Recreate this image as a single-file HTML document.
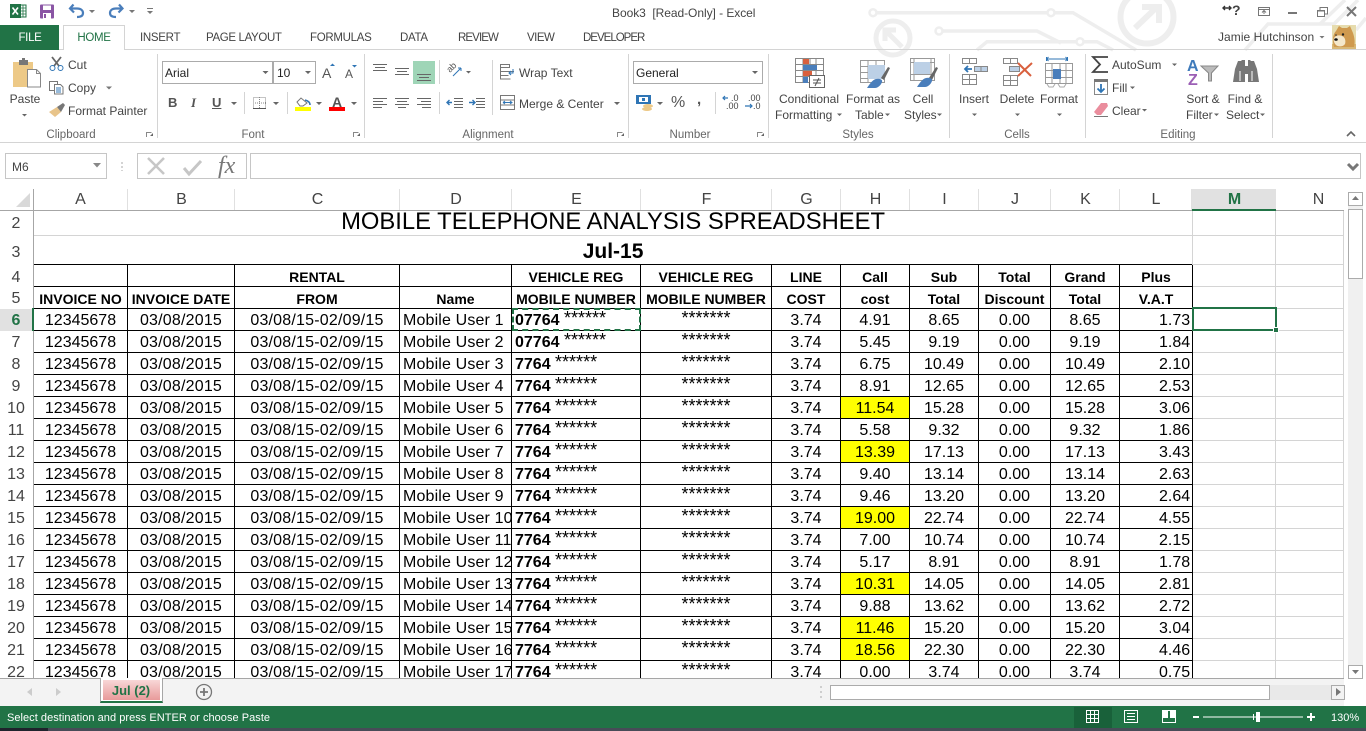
<!DOCTYPE html>
<html lang="en"><head><meta charset="utf-8"><title>Book3 [Read-Only] - Excel</title>
<style>
html,body{margin:0;padding:0;width:1366px;height:731px;overflow:hidden;background:#fff;font-family:"Liberation Sans",Arial,sans-serif}
#app{position:relative;width:1366px;height:731px;overflow:hidden;background:#fff}
.t{position:absolute;white-space:nowrap;font-size:12px;line-height:16px;color:#444}
.c{transform:translateX(-50%)}
.tab{font-size:11.5px;letter-spacing:-.3px}
.g{color:#666;font-size:11.5px}
.box{position:absolute;border:1px solid #ababab;box-sizing:border-box;background:#fff}
svg{position:absolute;left:0;top:0}
.ch{position:absolute;top:189px;height:21px;padding-left:1px;font-size:16px;line-height:21px;color:#444;text-align:center;border-right:1px solid #e0e0e0;box-sizing:border-box}
.rh{position:absolute;left:0;margin-top:1px;width:32px;text-align:center;font-size:16px;line-height:22px;color:#444}
#sheet{position:absolute;left:34px;top:211px;width:1310px;height:467px;overflow:hidden}
table{border-collapse:separate;border-spacing:0;table-layout:fixed;width:1310px;font-family:"Liberation Sans",Arial,sans-serif}
td{box-sizing:border-box;height:22px;padding:2px 0 0;border-right:1px solid #000;border-bottom:1px solid #000;font-size:16px;line-height:19px;text-align:center;white-space:nowrap;overflow:hidden;color:#000;vertical-align:bottom}
td.h{font-size:14px;font-weight:bold;padding-top:4px;line-height:17px}
td.l{text-align:left;padding-left:3px}
td.r{text-align:right;padding-right:2px}
td.x{border-color:#d4d4d4}
td.y{background:#ff0}
td:not(.h):nth-child(2),td:not(.h):nth-child(3){letter-spacing:.2px}
td:not(.h):nth-child(4){letter-spacing:.15px}
td.e{letter-spacing:0}
.s{font-size:18px;position:relative;top:-1px;line-height:10px}
.e b{font-size:16px}
</style></head><body><div id="app">

<!-- watermark + icons, top of window -->
<svg width="1366" height="190" viewBox="0 0 1366 190">
<g fill="none" stroke="#eeeeee" stroke-width="3.500">
<path d="M877 12.700H1047M1055 12.700H1073L1136 50"/><circle cx="873" cy="12.700" r="3.500" stroke-width="2.500"/><circle cx="1051" cy="12.700" r="3.500" stroke-width="2.500"/>
<circle cx="893" cy="38" r="17" stroke-width="5"/><path d="M902 47L887 32M885 41V30h11" stroke-width="5"/>
<circle cx="1147" cy="17" r="26.500" stroke-width="6"/><path d="M1135 28l23-22M1142 7h17v16" stroke-width="6"/>
<circle cx="939" cy="31" r="3.500" stroke-width="2.500"/><path d="M943 31h94l24 12"/><circle cx="1080" cy="41.700" r="3.500" stroke-width="2.500"/>
<path d="M977 50l10-8.300h89M1084 41.700h13l16 8.300"/>
<path d="M1245 50L1268 24H1334L1358 0M1356 30L1366 18"/>
<path d="M1320 24L1345 0"/>
</g>

<!-- excel logo -->
<rect x="16" y="5" width="10" height="12" fill="#fff" stroke="#217346"/><path d="M19 5v12M23 5v12M16 8h10M16 11h10M16 14h10" stroke="#217346" stroke-width=".8"/>
<rect x="10" y="4" width="11" height="14" fill="#217346"/><path d="M12.500 7.500l5.500 7M18 7.500l-5.500 7" stroke="#fff" stroke-width="1.600"/>
<!-- save -->
<rect x="40" y="4.500" width="14" height="14" rx="1" fill="#8a55a4"/><rect x="43" y="5.500" width="8" height="4.500" fill="#fff"/><rect x="43" y="13" width="8" height="5.500" fill="#fff"/><rect x="44" y="14" width="2" height="4" fill="#8a55a4"/>
<!-- undo / redo -->
<path d="M73.500 4.500L70 8.500l4 4M70.500 8.500H77c4 0 6 2 6 4.500s-2 4-6 4" fill="none" stroke="#4a7ebb" stroke-width="2.200"/>
<path d="M119 4.500l3.500 4-4 4M122 8.500H116c-4 0-6 2-6 4.500s2 4 6 4" fill="none" stroke="#4a7ebb" stroke-width="2.200"/>
<g fill="#777"><path d="M89 10h6l-3 3zM129 10h6l-3 3z"/><rect x="147" y="8" width="6" height="1"/><path d="M147 11h6l-3 3z"/></g>

<!-- paste -->
<rect x="13" y="62" width="20" height="25" fill="#edc987"/><rect x="19" y="60" width="9" height="5" fill="#777"/><rect x="22" y="58" width="3" height="3" fill="#777"/>
<path d="M27.500 69.500h9l4 4v13.500h-13z" fill="#fff" stroke="#888"/><path d="M36.500 69.500v4h4" fill="none" stroke="#888"/>
<path d="M22 114h5l-2.500 2.500z" fill="#666"/>
<!-- cut -->
<g fill="none"><path d="M52 57l7 9M61 57l-7 9" stroke="#666" stroke-width="1.800"/><circle cx="52.500" cy="68" r="2.500" stroke="#2f75b5"/><circle cx="60.500" cy="68" r="2.500" stroke="#2f75b5"/></g>
<!-- copy -->
<g fill="#fff" stroke="#777"><path d="M49.500 81.500h8v9h-8z"/><path d="M54.500 84.500h6l2.500 2.500v7h-8.500z"/></g><path d="M56 88h5M56 90h5M56 92h5" stroke="#2f75b5"/>
<path d="M106 86.500h6l-3 3z" fill="#777"/>
<!-- painter -->
<path d="M49 112l8-5 4 5-6 5z" fill="#e8c48a"/><path d="M57 107l6-4 2 2-4 7z" fill="#777"/>

<!-- separators -->
<g fill="#d4d4d4"><rect x="157" y="54" width="1" height="84"/><rect x="364" y="54" width="1" height="84"/><rect x="628" y="54" width="1" height="84"/><rect x="768" y="54" width="1" height="84"/><rect x="949" y="54" width="1" height="84"/><rect x="1085" y="54" width="1" height="84"/><rect x="1272" y="54" width="1" height="84"/>
<rect x="244" y="92" width="1" height="22"/><rect x="287" y="92" width="1" height="22"/><rect x="439" y="60" width="1" height="24"/><rect x="439" y="92" width="1" height="22"/><rect x="492" y="60" width="1" height="55"/><rect x="715" y="92" width="1" height="22"/></g>
<!-- dialog launchers -->
<g fill="none" stroke="#888"><path d="M146.500 137v-4.500h5M353.500 137v-4.500h5M617.500 137v-4.500h5M757.500 137v-4.500h5"/></g>
<g fill="#666"><path d="M150 135l3-3v3zM357 135l3-3v3zM621 135l3-3v3zM761 135l3-3v3z" transform="translate(0 1)"/></g>

<!-- font controls arrows -->
<g fill="#666"><path d="M231 102h6l-3 3zM273 102h6l-3 3zM316 102h6l-3 3zM351 102h6l-3 3zM614 102h6l-3 3zM657 102h6l-3 3zM466 71h5l-2.500 2.500z"/></g>
<path d="M330 66l2.500-2.500L335 66z" fill="#2f75b5"/><path d="M352 65h5l-2.500 2.500z" fill="#2f75b5"/>
<!-- borders icon -->
<g fill="none" stroke="#888" stroke-dasharray="1 1"><rect x="253.500" y="97.500" width="12" height="11"/><path d="M259.500 97v12M253 103h13"/></g><path d="M253 108.500h13" stroke="#555"/>
<!-- fill colour -->
<path d="M297 102l4-4 6 5-4 3h-3z" fill="#fff" stroke="#777"/><path d="M305 100c3 1 5 2 5 5" fill="none" stroke="#2f75b5" stroke-width="1.500"/>
<rect x="295" y="107" width="16" height="4" fill="#ff0"/>
<rect x="329" y="107" width="16" height="4" fill="#f00"/>

<!-- alignment -->
<rect x="413" y="61" width="22" height="23" fill="#9fd5b7"/>
<g fill="#666"><rect x="373" y="64" width="14" height="1"/><rect x="375" y="67" width="10" height="1"/><rect x="373" y="70" width="14" height="1"/>
<rect x="395" y="68" width="14" height="1"/><rect x="397" y="71" width="10" height="1"/><rect x="395" y="74" width="14" height="1"/>
<rect x="417" y="74" width="14" height="1"/><rect x="419" y="77" width="10" height="1"/><rect x="417" y="80" width="14" height="1"/>
<rect x="373" y="98" width="14" height="1"/><rect x="373" y="101" width="10" height="1"/><rect x="373" y="104" width="14" height="1"/><rect x="373" y="107" width="9" height="1"/>
<rect x="395" y="98" width="14" height="1"/><rect x="397" y="101" width="10" height="1"/><rect x="395" y="104" width="14" height="1"/><rect x="398" y="107" width="8" height="1"/>
<rect x="417" y="98" width="14" height="1"/><rect x="421" y="101" width="10" height="1"/><rect x="417" y="104" width="14" height="1"/><rect x="422" y="107" width="9" height="1"/>
<rect x="454" y="98" width="9" height="1"/><rect x="454" y="101" width="9" height="1"/><rect x="454" y="104" width="9" height="1"/><rect x="454" y="107" width="9" height="1"/>
<rect x="476" y="98" width="9" height="1"/><rect x="476" y="101" width="9" height="1"/><rect x="476" y="104" width="9" height="1"/><rect x="476" y="107" width="9" height="1"/></g>
<path d="M452 102.500h-5m2.500-2.500l-2.500 2.500 2.500 2.500M469 102.500h6m-2.500-2.500l2.500 2.500-2.500 2.500" fill="none" stroke="#2f75b5" stroke-width="1.400"/>
<!-- orientation -->
<path d="M453 76l8-8M461 68v3M461 68h-3" stroke="#2f75b5" fill="none"/>
<text x="450" y="73" font-size="9" fill="#555" transform="rotate(-45 450 73)" font-family="Liberation Sans">ab</text>
<!-- wrap / merge -->
<g fill="none" stroke="#777"><rect x="500.500" y="64.500" width="9" height="3"/><path d="M500 71.500h14M500.500 75.500h8M500.500 64v15h10"/><rect x="500.500" y="95.500" width="14" height="14"/><path d="M500 100h15M500 105h15"/></g>
<path d="M513 69v4h-4m2-2l-2 2 2 2M503 102.500h9m-2-1.500l2 1.500-2 1.500m-7-1.500l2-1.500m-2 1.500l2 1.500" fill="none" stroke="#2f75b5"/>
<!-- number -->
<rect x="636" y="95" width="15" height="9" fill="#2f75b5"/><rect x="639" y="97" width="9" height="5" fill="#fff"/><rect x="642" y="98" width="3" height="3" fill="#2f75b5"/><ellipse cx="648" cy="106" rx="5" ry="2" fill="#edc987"/><ellipse cx="647" cy="109" rx="5" ry="2" fill="#edc987"/>
<path d="M728 98h-5m2-2l-2 2 2 2" fill="none" stroke="#2f75b5" stroke-width="1.200"/>
<path d="M745 106h7m-2-2l2 2-2 2" fill="none" stroke="#2f75b5" stroke-width="1.200"/>

<!-- conditional formatting -->
<g fill="none" stroke="#888"><rect x="795.500" y="58.500" width="28" height="24" fill="#fff"/><path d="M803 58v24M810 58v24M816 58v24M795 64.500h28M795 70.500h28M795 76.500h28"/></g>
<rect x="803" y="59" width="6" height="5" fill="#d9603e"/><rect x="803" y="65" width="14" height="5" fill="#4a7ebb"/><rect x="803" y="71" width="9" height="5" fill="#d9603e"/><rect x="803" y="77" width="5" height="6" fill="#4a7ebb"/>
<rect x="809.500" y="75.500" width="15" height="12" fill="#fff" stroke="#666"/><path d="M813 80h8M813 83h8M819 78l-4 8" stroke="#555" fill="none"/>
<!-- format as table -->
<g fill="none" stroke="#999"><rect x="860.500" y="60.500" width="24" height="22" fill="#fff"/><path d="M868 60v22M876 60v22M860 66.500h24M860 72.500h24M860 78.500h24"/></g>
<rect x="868" y="65" width="17" height="14" fill="#bcd0e6"/>
<path d="M881 78l7-11 2 1-6 12z" fill="#666"/><path d="M867 88c2-3 5-8 9-9 4-1 7 1 6 3-1 3-4 6-7 6z" fill="#4a7ebb"/>
<!-- cell styles -->
<g fill="none" stroke="#999"><rect x="910.500" y="58.500" width="24" height="22" fill="#fff"/><path d="M914 58v22M931 58v22M910 62.500h24M910 74.500h24"/></g>
<rect x="914" y="62" width="16" height="12" fill="#bcd0e6"/>
<path d="M929 78l7-11 2 1-6 12z" fill="#666"/><path d="M917 87c2-3 5-8 9-9 4-1 7 1 6 3-1 3-4 6-7 6z" fill="#4a7ebb"/>
<!-- insert -->
<g fill="none" stroke="#888"><rect x="962.500" y="58.500" width="14" height="5"/><path d="M969.500 58v5"/><rect x="962.500" y="74.500" width="14" height="10"/><path d="M969.500 74v10M962 79.500h14"/><rect x="974.500" y="66.500" width="13" height="5" fill="#bcd0e6"/><path d="M981 66v5"/></g>
<path d="M972 69h-7m3-3l-3 3 3 3" fill="none" stroke="#2f75b5" stroke-width="1.800"/>
<!-- delete -->
<g fill="none" stroke="#888"><rect x="1003.500" y="58.500" width="14" height="5"/><path d="M1010.500 58v5"/><rect x="1003.500" y="75.500" width="14" height="10"/><path d="M1010.500 75v10M1003 80.500h14"/><rect x="1009.500" y="66.500" width="10" height="5" fill="#bcd0e6"/></g>
<path d="M1018 63l13 13M1032 63l-14 13" stroke="#d9603e" stroke-width="2"/>
<!-- format -->
<path d="M1046.500 59h21m-19-2l-2 2 2 2m17-4l2 2-2 2" fill="none" stroke="#2f75b5"/>
<path d="M1046.500 57v4M1067.500 57v4" stroke="#2f75b5"/>
<g fill="none" stroke="#999"><rect x="1045.500" y="63.500" width="27" height="20"/><path d="M1052 63v20M1060 63v20M1066 63v20M1045 70.500h27M1045 77.500h27"/></g>
<rect x="1053" y="69" width="8" height="10" fill="#4a7ebb"/>
<path d="M1047 84l2 3h4l2-3M1058 84l2 3h4l2-3" fill="none" stroke="#aaa"/>
<!-- autosum -->
<path d="M1108 57h-15l7 7.500-7 7.500h15" fill="none" stroke="#444" stroke-width="1.800"/>
<path d="M1172 63.500h5l-2.500 2.500zM1130 86.500h5l-2.500 2.500zM1142 109h5l-2.500 2.500zM1214 113.500h5l-2.500 2.500zM1260 113.500h5l-2.500 2.500zM837 113.500h5l-2.500 2.500zM885 113.500h5l-2.500 2.500zM937 113.500h5l-2.500 2.500zM972 113.500h5l-2.500 2.500zM1015 113.500h5l-2.500 2.500zM1057 113.500h5l-2.500 2.500z" fill="#666"/>
<!-- fill -->
<rect x="1094.500" y="79.500" width="13" height="15" fill="#fff" stroke="#888"/><rect x="1094" y="79" width="14" height="3" fill="#777"/><path d="M1101 84v8m-3.500-3.500l3.500 3.500 3.500-3.500" fill="none" stroke="#2f75b5" stroke-width="1.800"/>
<!-- eraser -->
<path d="M1094 112l7-9h6l1 3-7 9h-4z" fill="#ea8d9d"/><path d="M1094 116.500h14" stroke="#777"/>
<!-- sort -->
<text x="1187" y="71" font-size="16" font-weight="bold" fill="#3f7bbb" font-family="Liberation Sans">A</text>
<text x="1188" y="85" font-size="16" font-weight="bold" fill="#9b5fb5" font-family="Liberation Sans">Z</text>
<path d="M1201 66h17l-6.500 7v8h-3v-8z" fill="#bbb" stroke="#888"/>
<!-- binoculars -->
<path d="M1233 82l2-13 3-8h3l1-1h3v22zM1259 82l-2-13-3-8h-3l-1-1h-2v22z" fill="#777"/><rect x="1244" y="66" width="4" height="8" fill="#777"/><path d="M1240 71v10M1252 71v10" stroke="#fff"/>
<path d="M1347 136l4-4 4 4" fill="none" stroke="#666" stroke-width="1.600"/>

<!-- window controls -->
<path d="M1223 8h8m-6-2l-2 2 2 2m4-4l2 2-2 2" fill="none" stroke="#333" stroke-width="1.400"/>
<rect x="1258.500" y="7.500" width="11" height="8" fill="none" stroke="#777"/><path d="M1258 9.500h12M1264 14v-3m-2 1.500l2-2 2 2" fill="none" stroke="#777"/>
<rect x="1288" y="12" width="9" height="2" fill="#777"/>
<g fill="none" stroke="#777"><rect x="1317.500" y="10.500" width="7" height="6"/><path d="M1320 10V7.500h7.500V14H1325"/></g><rect x="1317" y="10" width="8" height="1.500" fill="#777"/>
<path d="M1347 7l9 9M1356 7l-9 9" stroke="#777" stroke-width="2"/>
<path d="M1319.500 36h5l-2.500 2.500z" fill="#777"/>
<!-- avatar -->
<rect x="1332" y="25" width="24" height="24" fill="#e6dcae"/>
<rect x="1332" y="44" width="24" height="5" fill="#d8b877"/>
<path d="M1334 47c-2-7-1-13 2-16l3-5 3 2h5l3-2 3 7c2 6 2 10 1 14z" fill="#cf9a4f"/>
<path d="M1334 38c2-3 5-3 8-2 3 1 4 5 3 8-2 3-7 3-9 1-2-2-3-5-2-7z" fill="#f4e8cc"/>
<circle cx="1343" cy="34.500" r="1.200" fill="#222"/><circle cx="1336" cy="35" r=".8" fill="#333"/><ellipse cx="1336" cy="39.500" rx="1.800" ry="1.300" fill="#111"/>

<!-- formula bar marks -->
<path d="M122 162v2M122 166v2M122 170v1" stroke="#aaa" fill="none"/>
<path d="M148 158l16 16M164 158l-16 16" stroke="#c6c6c6" stroke-width="2.500"/>
<path d="M184 168l5 6 12-13" fill="none" stroke="#c6c6c6" stroke-width="3"/>
<path d="M1348 164l5 5 5-5" fill="none" stroke="#777" stroke-width="3"/>
<path d="M93 163h8l-4 4.500z" fill="#888"/>
</svg>

<!-- title bar text -->
<div class="t" style="left:612px;top:5px;white-space:pre;letter-spacing:-.05px">Book3  [Read-Only] - Excel</div>
<div class="t" style="left:1232px;top:2px;font-size:14px;font-weight:bold;color:#444">?</div>

<!-- tabs -->
<div style="position:absolute;left:0;top:49px;width:1366px;height:1px;background:#d4d4d4"></div>
<div style="position:absolute;left:0;top:25px;width:59px;height:25px;background:#217346"></div>
<div class="t tab c" style="left:30px;top:30px;color:#fff">FILE</div>
<div style="position:absolute;left:63px;top:25px;width:62px;height:25px;box-sizing:border-box;border:1px solid #d4d4d4;border-bottom:0;background:#fff"></div>
<div class="t tab c" style="left:94px;top:30px;color:#217346">HOME</div>
<div class="t tab" style="left:140px;top:30px">INSERT</div>
<div class="t tab" style="left:206px;top:30px;letter-spacing:-.35px">PAGE LAYOUT</div>
<div class="t tab" style="left:310px;top:30px">FORMULAS</div>
<div class="t tab" style="left:400px;top:30px">DATA</div>
<div class="t tab" style="left:458px;top:30px;letter-spacing:-.9px">REVIEW</div>
<div class="t tab" style="left:527px;top:30px;letter-spacing:-.5px">VIEW</div>
<div class="t tab" style="left:583px;top:30px;letter-spacing:-1px">DEVELOPER</div>
<div class="t" style="left:1218px;top:29px;letter-spacing:.05px">Jamie Hutchinson</div>

<!-- clipboard -->
<div class="t c" style="left:25px;top:91px">Paste</div>
<div class="t" style="left:68px;top:57px">Cut</div>
<div class="t" style="left:68px;top:80px">Copy</div>
<div class="t" style="left:68px;top:103px">Format Painter</div>
<div class="t g c" style="left:71px;top:127px">Clipboard</div>

<!-- font -->
<div class="box" style="left:162px;top:61px;width:111px;height:23px"></div>
<div class="box" style="left:273px;top:61px;width:43px;height:23px"></div>
<div class="t" style="left:165px;top:65px;color:#222">Arial</div>
<div class="t" style="left:277px;top:65px;color:#222">10</div>
<div class="t" style="left:322px;top:65px;font-size:14px;color:#555">A</div>
<div class="t" style="left:345px;top:66px;font-size:12px;color:#555">A</div>
<svg width="360" height="120"><path d="M262.500 71h6l-3 3zM305 71h6l-3 3z" fill="#666"/></svg>
<div class="t" style="left:168px;top:95px;font-weight:bold;font-size:13px;color:#555">B</div>
<div class="t" style="left:191px;top:95px;font-style:italic;font-family:'Liberation Serif',serif;font-weight:bold;font-size:13px;color:#555">I</div>
<div class="t" style="left:212px;top:95px;font-weight:bold;font-size:13px;color:#555;text-decoration:underline">U</div>
<div class="t c" style="left:337px;top:94px;font-weight:bold;font-size:14px;color:#555">A</div>
<div class="t g c" style="left:253px;top:127px">Font</div>

<!-- alignment -->
<div class="t" style="left:519px;top:65px">Wrap Text</div>
<div class="t" style="left:519px;top:96px">Merge &amp; Center</div>
<div class="t g c" style="left:488px;top:127px">Alignment</div>

<!-- number -->
<div class="box" style="left:633px;top:61px;width:130px;height:23px"></div>
<div class="t" style="left:636px;top:65px;color:#222">General</div>
<svg width="770" height="120"><path d="M752 71h6l-3 3z" fill="#666"/></svg>
<div class="t" style="left:671px;top:95px;font-size:16px;color:#555">%</div>
<div class="t" style="left:697px;top:92px;font-size:15px;font-weight:bold;color:#555">,</div>
<div class="t" style="left:731px;top:94px;font-size:9px;line-height:9px;color:#444">.0</div>
<div class="t" style="left:726px;top:102px;font-size:9px;line-height:9px;color:#444">.00</div>
<div class="t" style="left:748px;top:94px;font-size:9px;line-height:9px;color:#444">.00</div>
<div class="t" style="left:753px;top:102px;font-size:9px;line-height:9px;color:#444">.0</div>
<div class="t g c" style="left:690px;top:127px">Number</div>

<!-- styles -->
<div class="t c" style="left:809px;top:91px">Conditional</div>
<div class="t" style="left:775px;top:107px">Formatting</div>
<div class="t c" style="left:873px;top:91px">Format as</div>
<div class="t" style="left:855px;top:107px">Table</div>
<div class="t c" style="left:923px;top:91px">Cell</div>
<div class="t" style="left:904px;top:107px">Styles</div>
<div class="t g c" style="left:858px;top:127px">Styles</div>

<!-- cells -->
<div class="t c" style="left:974px;top:91px">Insert</div>
<div class="t c" style="left:1017px;top:91px">Delete</div>
<div class="t c" style="left:1059px;top:91px">Format</div>
<div class="t g c" style="left:1017px;top:127px">Cells</div>

<!-- editing -->
<div class="t" style="left:1112px;top:57px">AutoSum</div>
<div class="t" style="left:1112px;top:80px">Fill</div>
<div class="t" style="left:1112px;top:103px">Clear</div>
<div class="t c" style="left:1203px;top:91px">Sort &amp;</div>
<div class="t" style="left:1186px;top:107px">Filter</div>
<div class="t c" style="left:1245px;top:91px">Find &amp;</div>
<div class="t" style="left:1226px;top:107px">Select</div>
<div class="t g c" style="left:1178px;top:127px">Editing</div>

<div style="position:absolute;left:0;top:142px;width:1366px;height:1px;background:#d4d4d4"></div>

<!-- formula bar -->
<div class="box" style="left:5px;top:153px;width:102px;height:26px;border-color:#c6c6c6;background:none"></div>
<div class="t" style="left:12px;top:159px">M6</div>
<div class="box" style="left:137px;top:153px;width:110px;height:26px;border-color:#c6c6c6;background:none"></div>
<div class="t" style="left:218px;top:155px;font:italic 24px/22px 'Liberation Serif',serif;color:#777">fx</div>
<div class="box" style="left:250px;top:153px;width:1111px;height:26px;border-color:#c6c6c6;background:none"></div>

<!-- column headers -->
<div style="position:absolute;left:1192px;top:189px;width:84px;height:21px;background:#e1e1e1"></div>
<div class="ch" style="left:33px;width:95px">A</div>
<div class="ch" style="left:128px;width:107px">B</div>
<div class="ch" style="left:235px;width:165px">C</div>
<div class="ch" style="left:400px;width:112px">D</div>
<div class="ch" style="left:512px;width:129px">E</div>
<div class="ch" style="left:641px;width:131px">F</div>
<div class="ch" style="left:772px;width:69px">G</div>
<div class="ch" style="left:841px;width:69px">H</div>
<div class="ch" style="left:910px;width:69px">I</div>
<div class="ch" style="left:979px;width:72px">J</div>
<div class="ch" style="left:1051px;width:69px">K</div>
<div class="ch" style="left:1120px;width:72px">L</div>
<div class="ch" style="left:1192px;width:84px;color:#217346;font-weight:bold;border:0">M</div>
<div class="ch" style="left:1276px;width:84px;border:0">N</div>
<svg width="40" height="212"><path d="M30 193v14H16z" fill="#d9d9d9"/></svg>
<div style="position:absolute;left:0;top:210px;width:1344px;height:1px;background:#a6a6a6"></div>
<div style="position:absolute;left:1192px;top:209px;width:84px;height:2px;background:#217346"></div>
<div style="position:absolute;left:33px;top:189px;width:1px;height:489px;background:#a6a6a6"></div>

<!-- row headers -->
<div class="rh" style="top:211px;height:25px;line-height:24px">2</div>
<div class="rh" style="top:236px;height:29px;line-height:32px">3</div>
<div class="rh" style="top:265px;line-height:24px">4</div>
<div class="rh" style="top:287px">5</div>
<div style="position:absolute;left:0;top:309px;width:33px;height:22px;background:#e1e1e1"></div>
<div style="position:absolute;left:32px;top:308px;width:2px;height:23px;background:#217346"></div>
<div class="rh" style="top:309px;color:#217346;font-weight:bold">6</div>
<div class="rh" style="top:331px">7</div>
<div class="rh" style="top:353px">8</div>
<div class="rh" style="top:375px">9</div>
<div class="rh" style="top:397px">10</div>
<div class="rh" style="top:419px">11</div>
<div class="rh" style="top:441px">12</div>
<div class="rh" style="top:463px">13</div>
<div class="rh" style="top:485px">14</div>
<div class="rh" style="top:507px">15</div>
<div class="rh" style="top:529px">16</div>
<div class="rh" style="top:551px">17</div>
<div class="rh" style="top:573px">18</div>
<div class="rh" style="top:595px">19</div>
<div class="rh" style="top:617px">20</div>
<div class="rh" style="top:639px">21</div>
<div class="rh" style="top:661px;height:16px;overflow:hidden">22</div>

<!-- grid -->
<div style="position:absolute;left:34px;top:264px;width:1159px;height:1px;background:#000"></div>
<div id="sheet">
<table>
<colgroup><col style="width:94px"><col style="width:107px"><col style="width:165px"><col style="width:112px"><col style="width:129px"><col style="width:131px"><col style="width:69px"><col style="width:69px"><col style="width:69px"><col style="width:72px"><col style="width:69px"><col style="width:73px"><col style="width:83px"><col style="width:68px"></colgroup>
<tr><td colspan="12" class="x" style="height:25px;font-size:23.800px;line-height:22px;padding:0;vertical-align:top;overflow:visible">MOBILE TELEPHONE ANALYSIS SPREADSHEET</td><td class="x" style="height:25px"></td><td class="x" style="height:25px"></td></tr>
<tr><td colspan="12" style="height:29px;font-size:21px;font-weight:bold;padding-top:3px;line-height:26px;border-bottom:0;border-right-color:#d4d4d4">Jul-15</td><td class="x" style="height:29px"></td><td class="x" style="height:29px"></td></tr>
<tr><td class="h"></td><td class="h"></td><td class="h">RENTAL</td><td class="h"></td><td class="h">VEHICLE REG</td><td class="h">VEHICLE REG</td><td class="h">LINE</td><td class="h">Call</td><td class="h">Sub</td><td class="h">Total</td><td class="h">Grand</td><td class="h">Plus</td><td class="x"></td><td class="x"></td></tr>
<tr><td class="h">INVOICE NO</td><td class="h">INVOICE DATE</td><td class="h">FROM</td><td class="h">Name</td><td class="h">MOBILE NUMBER</td><td class="h">MOBILE NUMBER</td><td class="h">COST</td><td class="h">cost</td><td class="h">Total</td><td class="h">Discount</td><td class="h">Total</td><td class="h">V.A.T</td><td class="x"></td><td class="x"></td></tr>
<tr><td>12345678</td><td>03/08/2015</td><td>03/08/15-02/09/15</td><td class="l">Mobile User 1</td><td class="l e"><b>07764</b> <span class="s">******</span></td><td><span class="s">*******</span></td><td>3.74</td><td>4.91</td><td>8.65</td><td>0.00</td><td>8.65</td><td class="r">1.73</td><td class="x"></td><td class="x"></td></tr>
<tr><td>12345678</td><td>03/08/2015</td><td>03/08/15-02/09/15</td><td class="l">Mobile User 2</td><td class="l e"><b>07764</b> <span class="s">******</span></td><td><span class="s">*******</span></td><td>3.74</td><td>5.45</td><td>9.19</td><td>0.00</td><td>9.19</td><td class="r">1.84</td><td class="x"></td><td class="x"></td></tr>
<tr><td>12345678</td><td>03/08/2015</td><td>03/08/15-02/09/15</td><td class="l">Mobile User 3</td><td class="l e"><b>7764</b> <span class="s">******</span></td><td><span class="s">*******</span></td><td>3.74</td><td>6.75</td><td>10.49</td><td>0.00</td><td>10.49</td><td class="r">2.10</td><td class="x"></td><td class="x"></td></tr>
<tr><td>12345678</td><td>03/08/2015</td><td>03/08/15-02/09/15</td><td class="l">Mobile User 4</td><td class="l e"><b>7764</b> <span class="s">******</span></td><td><span class="s">*******</span></td><td>3.74</td><td>8.91</td><td>12.65</td><td>0.00</td><td>12.65</td><td class="r">2.53</td><td class="x"></td><td class="x"></td></tr>
<tr><td>12345678</td><td>03/08/2015</td><td>03/08/15-02/09/15</td><td class="l">Mobile User 5</td><td class="l e"><b>7764</b> <span class="s">******</span></td><td><span class="s">*******</span></td><td>3.74</td><td class="y">11.54</td><td>15.28</td><td>0.00</td><td>15.28</td><td class="r">3.06</td><td class="x"></td><td class="x"></td></tr>
<tr><td>12345678</td><td>03/08/2015</td><td>03/08/15-02/09/15</td><td class="l">Mobile User 6</td><td class="l e"><b>7764</b> <span class="s">******</span></td><td><span class="s">*******</span></td><td>3.74</td><td>5.58</td><td>9.32</td><td>0.00</td><td>9.32</td><td class="r">1.86</td><td class="x"></td><td class="x"></td></tr>
<tr><td>12345678</td><td>03/08/2015</td><td>03/08/15-02/09/15</td><td class="l">Mobile User 7</td><td class="l e"><b>7764</b> <span class="s">******</span></td><td><span class="s">*******</span></td><td>3.74</td><td class="y">13.39</td><td>17.13</td><td>0.00</td><td>17.13</td><td class="r">3.43</td><td class="x"></td><td class="x"></td></tr>
<tr><td>12345678</td><td>03/08/2015</td><td>03/08/15-02/09/15</td><td class="l">Mobile User 8</td><td class="l e"><b>7764</b> <span class="s">******</span></td><td><span class="s">*******</span></td><td>3.74</td><td>9.40</td><td>13.14</td><td>0.00</td><td>13.14</td><td class="r">2.63</td><td class="x"></td><td class="x"></td></tr>
<tr><td>12345678</td><td>03/08/2015</td><td>03/08/15-02/09/15</td><td class="l">Mobile User 9</td><td class="l e"><b>7764</b> <span class="s">******</span></td><td><span class="s">*******</span></td><td>3.74</td><td>9.46</td><td>13.20</td><td>0.00</td><td>13.20</td><td class="r">2.64</td><td class="x"></td><td class="x"></td></tr>
<tr><td>12345678</td><td>03/08/2015</td><td>03/08/15-02/09/15</td><td class="l">Mobile User 10</td><td class="l e"><b>7764</b> <span class="s">******</span></td><td><span class="s">*******</span></td><td>3.74</td><td class="y">19.00</td><td>22.74</td><td>0.00</td><td>22.74</td><td class="r">4.55</td><td class="x"></td><td class="x"></td></tr>
<tr><td>12345678</td><td>03/08/2015</td><td>03/08/15-02/09/15</td><td class="l">Mobile User 11</td><td class="l e"><b>7764</b> <span class="s">******</span></td><td><span class="s">*******</span></td><td>3.74</td><td>7.00</td><td>10.74</td><td>0.00</td><td>10.74</td><td class="r">2.15</td><td class="x"></td><td class="x"></td></tr>
<tr><td>12345678</td><td>03/08/2015</td><td>03/08/15-02/09/15</td><td class="l">Mobile User 12</td><td class="l e"><b>7764</b> <span class="s">******</span></td><td><span class="s">*******</span></td><td>3.74</td><td>5.17</td><td>8.91</td><td>0.00</td><td>8.91</td><td class="r">1.78</td><td class="x"></td><td class="x"></td></tr>
<tr><td>12345678</td><td>03/08/2015</td><td>03/08/15-02/09/15</td><td class="l">Mobile User 13</td><td class="l e"><b>7764</b> <span class="s">******</span></td><td><span class="s">*******</span></td><td>3.74</td><td class="y">10.31</td><td>14.05</td><td>0.00</td><td>14.05</td><td class="r">2.81</td><td class="x"></td><td class="x"></td></tr>
<tr><td>12345678</td><td>03/08/2015</td><td>03/08/15-02/09/15</td><td class="l">Mobile User 14</td><td class="l e"><b>7764</b> <span class="s">******</span></td><td><span class="s">*******</span></td><td>3.74</td><td>9.88</td><td>13.62</td><td>0.00</td><td>13.62</td><td class="r">2.72</td><td class="x"></td><td class="x"></td></tr>
<tr><td>12345678</td><td>03/08/2015</td><td>03/08/15-02/09/15</td><td class="l">Mobile User 15</td><td class="l e"><b>7764</b> <span class="s">******</span></td><td><span class="s">*******</span></td><td>3.74</td><td class="y">11.46</td><td>15.20</td><td>0.00</td><td>15.20</td><td class="r">3.04</td><td class="x"></td><td class="x"></td></tr>
<tr><td>12345678</td><td>03/08/2015</td><td>03/08/15-02/09/15</td><td class="l">Mobile User 16</td><td class="l e"><b>7764</b> <span class="s">******</span></td><td><span class="s">*******</span></td><td>3.74</td><td class="y">18.56</td><td>22.30</td><td>0.00</td><td>22.30</td><td class="r">4.46</td><td class="x"></td><td class="x"></td></tr>
<tr><td>12345678</td><td>03/08/2015</td><td>03/08/15-02/09/15</td><td class="l">Mobile User 17</td><td class="l e"><b>7764</b> <span class="s">******</span></td><td><span class="s">*******</span></td><td>3.74</td><td>0.00</td><td>3.74</td><td>0.00</td><td>3.74</td><td class="r">0.75</td><td class="x"></td><td class="x"></td></tr>
</table>
</div>

<!-- marching ants and selection -->
<div style="position:absolute;left:512px;top:308px;width:129px;height:23px;box-sizing:border-box;border:2px dashed #217346"></div>
<div style="position:absolute;left:1192px;top:307px;width:85px;height:24px;box-sizing:border-box;border:2px solid #217346"></div>
<div style="position:absolute;left:1273px;top:327px;width:6px;height:6px;box-sizing:border-box;background:#217346;border:1px solid #fff"></div>

<!-- vertical scrollbar -->
<div style="position:absolute;left:1344px;top:189px;width:22px;height:490px"></div>
<div style="position:absolute;left:1348px;top:206px;width:15px;height:459px;background:#f0f0f0"></div>
<div class="box" style="left:1348px;top:192px;width:15px;height:14px"></div>
<div class="box" style="left:1348px;top:209px;width:15px;height:70px"></div>
<div class="box" style="left:1348px;top:665px;width:15px;height:14px"></div>
<svg width="1366" height="731" style="pointer-events:none"><path d="M1352 200l3.500-4 3.500 4zM1352 670l3.500 4 3.500-4z" fill="#777"/></svg>

<!-- bottom sheet bar -->
<div style="position:absolute;left:0;top:678px;width:1344px;height:1px;background:#a6a6a6"></div>
<div style="position:absolute;left:0;top:679px;width:1344px;height:27px;background:#f3f3f3"></div>
<div style="position:absolute;left:100px;top:678px;width:63px;height:25px;box-sizing:border-box;background:#fff;border:1px solid #a6a6a6;border-top:0;border-bottom:2px solid #217346"></div>
<div style="position:absolute;left:103px;top:680px;width:57px;height:20px;background:linear-gradient(#f8d7d7,#e89a9a)"></div>
<div class="t c" style="left:131px;top:683px;font-weight:bold;color:#217346;font-size:13px">Jul (2)</div>
<svg width="1366" height="731" style="pointer-events:none">
<path d="M32 688v8l-5-4zM56 688v8l5-4z" fill="#ccc"/>
<circle cx="204" cy="692" r="7.500" fill="none" stroke="#777" stroke-width="1.300"/><path d="M200 692h8M204 688v8" stroke="#777" stroke-width="1.800"/>
<path d="M821 686v2M821 691v2M821 696v2" stroke="#aaa"/>
</svg>
<div style="position:absolute;left:830px;top:685px;width:501px;height:15px;background:#e9e9e9"></div>
<div class="box" style="left:830px;top:685px;width:440px;height:15px"></div>
<div class="box" style="left:1331px;top:685px;width:14px;height:15px;background:#f3f3f3"></div>
<svg width="1366" height="731" style="pointer-events:none"><path d="M1336 688v8l5-4z" fill="#777"/></svg>

<!-- status bar -->
<div style="position:absolute;left:0;top:706px;width:1366px;height:22px;background:#217346"></div>
<div style="position:absolute;left:0;top:728px;width:1366px;height:3px;background:#474b57"></div>
<div style="position:absolute;left:0;top:728px;width:48px;height:3px;background:#1f232c"></div>
<div style="position:absolute;left:1074px;top:707px;width:38px;height:21px;background:#19613a"></div>
<div class="t" style="left:7px;top:710px;color:#fff;font-size:11px;letter-spacing:.04px">Select destination and press ENTER or choose Paste</div>
<div class="t" style="left:1331px;top:710px;color:#fff;font-size:11px">130%</div>
<svg width="1366" height="731" style="pointer-events:none">
<g fill="none" stroke="#fff"><rect x="1086.500" y="710.500" width="12" height="12"/><path d="M1090.500 710v12M1094.500 710v12M1086 714.500h12M1086 718.500h12"/>
<rect x="1124.500" y="710.500" width="13" height="12"/><path d="M1127 713.500h8M1127 716.500h8M1127 719.500h8"/>
<rect x="1162.500" y="710.500" width="13" height="12"/></g>
<rect x="1163" y="711" width="5" height="7" fill="#fff"/><rect x="1170" y="711" width="5" height="7" fill="#fff"/>
<rect x="1193" y="716" width="6" height="2" fill="#fff"/>
<rect x="1203" y="716.500" width="100" height="1" fill="#fff"/>
<rect x="1256" y="712" width="4" height="10" fill="#fff"/><rect x="1253" y="714" width="1" height="6" fill="#fff"/>
<path d="M1307 717h8M1311 713v8" stroke="#fff" stroke-width="2"/>
</svg>
</div></body></html>
